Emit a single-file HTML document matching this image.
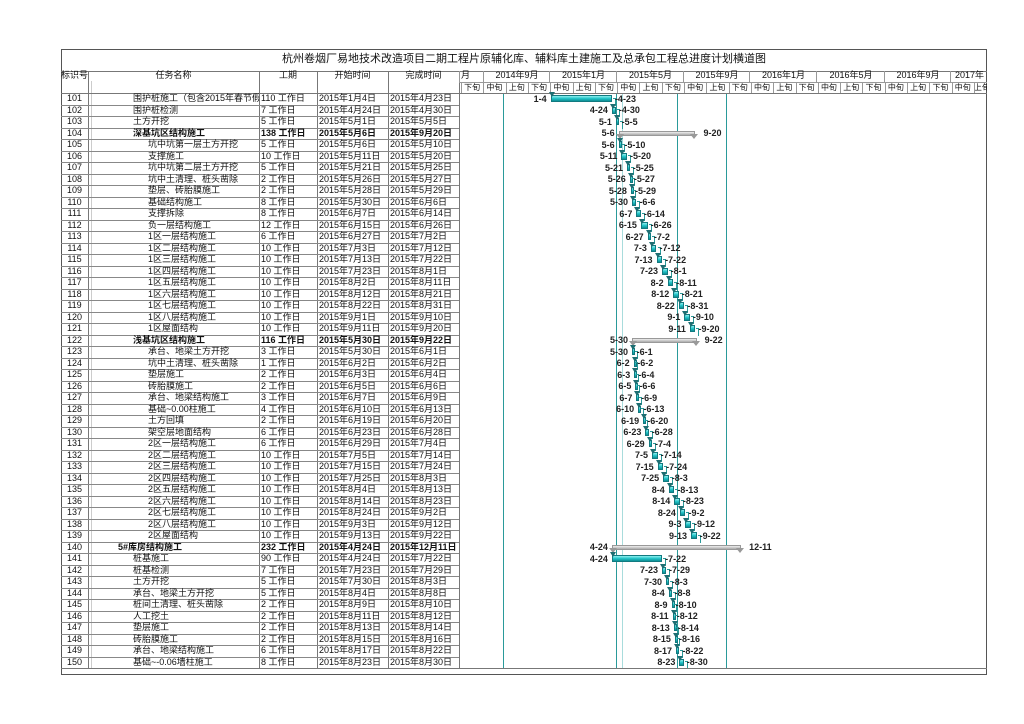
<!DOCTYPE html>
<html><head><meta charset="utf-8">
<style>
body{margin:0;background:#fff;width:1024px;height:724px;overflow:hidden;position:relative;font-family:"Liberation Sans","Noto Sans CJK SC",sans-serif;color:#111}
.a{position:absolute}
.t{position:absolute;font-size:9px;line-height:11.5px;white-space:nowrap;overflow:hidden}
.hl{position:absolute;height:1px;background:#777}
.vl{position:absolute;width:1px;background:#777}
.g{position:absolute;font-size:9px;line-height:10px;white-space:nowrap;font-weight:bold;color:#222}
.bar{position:absolute;height:7px;background:linear-gradient(#8ff0f0,#22c4c8 50%,#0e8f95);border:1px solid #127a80;box-sizing:border-box}
.sum{position:absolute;height:5px;background:linear-gradient(#eee,#aaa);border:1px solid #999;box-sizing:border-box}
.tri{position:absolute;width:0;height:0;border-left:3.5px solid transparent;border-right:3.5px solid transparent;border-top:5px solid #1e6e72}
.stri{position:absolute;width:0;height:0;border-left:4px solid transparent;border-right:4px solid transparent;border-top:5px solid #999}
</style></head><body>
<div id="root"></div>
<script>
var R=document.getElementById('root');var h='';
function A(s){h+=s;}
A('<div class="a" style="left:61px;top:49px;width:926px;height:626px;border:1px solid #555;box-sizing:border-box"></div>');
A('<div class="t" style="left:61px;top:52px;width:926px;text-align:center;font-size:11px;line-height:14px">杭州卷烟厂易地技术改造项目二期工程片原辅化库、辅料库土建施工及总承包工程总进度计划横道图</div>');
A('<div class="hl" style="left:61px;top:71px;width:926px"></div>');
var cols=[61,88,259,317,388,459];
var hd=['标识号','任务名称','工期','开始时间','完成时间'];
for(var i=0;i<5;i++){A('<div class="t" style="left:'+cols[i]+'px;top:70px;width:'+(cols[i+1]-cols[i])+'px;text-align:center">'+hd[i]+'</div>');}
for(var i=1;i<6;i++){A('<div class="vl" style="left:'+cols[i]+'px;top:71px;height:597px"></div>');}
A('<div class="vl" style="left:91px;top:81px;height:587px;background:#ccc"></div>');
A('<div class="hl" style="left:61px;top:93px;width:926px"></div>');
A('<div class="hl" style="left:459px;top:82px;width:528px;background:#999"></div>');
var per=['月','2014年9月','2015年1月','2015年5月','2015年9月','2016年1月','2016年5月','2016年9月','2017年'];
var px=[459,483,549,616,683,749,816,884,950,987];
for(var i=0;i<9;i++){A('<div class="t" style="left:'+(px[i]+2)+'px;top:70px;width:'+(px[i+1]-px[i]-2)+'px;text-align:'+(i==0?'left':'center')+'">'+per[i]+'</div>');A('<div class="vl" style="left:'+px[i]+'px;top:71px;height:11px;background:#999"></div>');}
var subs=['下旬','中旬','上旬'];var w=22.3;
for(var k=0;k<24;k++){var x=461+k*w;if(x>986)break;var ww=Math.min(w,987-x);A('<div class="t" style="left:'+x+'px;top:82px;width:'+ww+'px;text-align:center;font-size:8px">'+subs[k%3]+'</div>');A('<div class="vl" style="left:'+x+'px;top:83px;height:10px;background:#999"></div>');}
var D=[
['101','围护桩施工（包含2015年春节假期）',110,'1-4','4-23',0],
['102','围护桩检测',7,'4-24','4-30',0],
['103','土方开挖',5,'5-1','5-5',0],
['104','深基坑区结构施工',138,'5-6','9-20',1],
['105','坑中坑第一层土方开挖',5,'5-6','5-10',2],
['106','支撑施工',10,'5-11','5-20',2],
['107','坑中坑第二层土方开挖',5,'5-21','5-25',2],
['108','坑中土清理、桩头凿除',2,'5-26','5-27',2],
['109','垫层、砖胎膜施工',2,'5-28','5-29',2],
['110','基础结构施工',8,'5-30','6-6',2],
['111','支撑拆除',8,'6-7','6-14',2],
['112','负一层结构施工',12,'6-15','6-26',2],
['113','1区一层结构施工',6,'6-27','7-2',2],
['114','1区二层结构施工',10,'7-3','7-12',2],
['115','1区三层结构施工',10,'7-13','7-22',2],
['116','1区四层结构施工',10,'7-23','8-1',2],
['117','1区五层结构施工',10,'8-2','8-11',2],
['118','1区六层结构施工',10,'8-12','8-21',2],
['119','1区七层结构施工',10,'8-22','8-31',2],
['120','1区八层结构施工',10,'9-1','9-10',2],
['121','1区屋面结构',10,'9-11','9-20',2],
['122','浅基坑区结构施工',116,'5-30','9-22',1],
['123','承台、地梁土方开挖',3,'5-30','6-1',2],
['124','坑中土清理、桩头凿除',1,'6-2','6-2',2],
['125','垫层施工',2,'6-3','6-4',2],
['126','砖胎膜施工',2,'6-5','6-6',2],
['127','承台、地梁结构施工',3,'6-7','6-9',2],
['128','基础~0.00柱施工',4,'6-10','6-13',2],
['129','土方回填',2,'6-19','6-20',2],
['130','架空层地面结构',6,'6-23','6-28',2],
['131','2区一层结构施工',6,'6-29','7-4',2],
['132','2区二层结构施工',10,'7-5','7-14',2],
['133','2区三层结构施工',10,'7-15','7-24',2],
['134','2区四层结构施工',10,'7-25','8-3',2],
['135','2区五层结构施工',10,'8-4','8-13',2],
['136','2区六层结构施工',10,'8-14','8-23',2],
['137','2区七层结构施工',10,'8-24','9-2',2],
['138','2区八层结构施工',10,'9-3','9-12',2],
['139','2区屋面结构',10,'9-13','9-22',2],
['140','5#库房结构施工',232,'4-24','12-11',3],
['141','桩基施工',90,'4-24','7-22',0],
['142','桩基检测',7,'7-23','7-29',0],
['143','土方开挖',5,'7-30','8-3',0],
['144','承台、地梁土方开挖',5,'8-4','8-8',0],
['145','桩间土清理、桩头凿除',2,'8-9','8-10',0],
['146','人工挖土',2,'8-11','8-12',0],
['147','垫层施工',2,'8-13','8-14',0],
['148','砖胎膜施工',2,'8-15','8-16',0],
['149','承台、地梁结构施工',6,'8-17','8-22',0],
['150','基础~-0.06墙柱施工',8,'8-23','8-30',0]];
var md=[0,31,59,90,120,151,181,212,243,273,304,334];
function doy(s){var p=s.split('-');return md[+p[0]-1]+(+p[1]);}
function X(d){return 549+(d-1)*0.557;}
var RH=11.5,T0=93;
var indent=[133,133,148,118];
[[503,'#2a9a9a'],[616,'#2a9a9a'],[622,'#a8dcdc'],[677,'#2a9a9a'],[726,'#2a9a9a']].forEach(function(v){A('<div class="vl" style="left:'+v[0]+'px;top:94px;height:574px;background:'+v[1]+'"></div>');});
for(var i=0;i<D.length;i++){var r=D[i],y=T0+i*RH;var b=(r[5]==1||r[5]==3);var fw=b?'font-weight:bold;':'';
A('<div class="t" style="left:61px;top:'+y+'px;width:27px;text-align:center">'+r[0]+'</div>');
var ind=indent[r[5]];
A('<div class="t" style="left:'+ind+'px;top:'+y+'px;width:'+(259-ind)+'px;'+fw+'">'+r[1]+'</div>');
A('<div class="t" style="left:261px;top:'+y+'px;'+fw+'">'+r[2]+' 工作日</div>');
var sp=r[3].split('-'),ep=r[4].split('-');
A('<div class="t" style="left:319px;top:'+y+'px;width:68px;'+fw+'">2015年'+sp[0]+'月'+sp[1]+'日</div>');
A('<div class="t" style="left:390px;top:'+y+'px;width:68px;'+fw+'">2015年'+ep[0]+'月'+ep[1]+'日</div>');
A('<div class="hl" style="left:61px;top:'+(y+RH)+'px;width:398px;background:#888"></div>');
var s=doy(r[3]),e=doy(r[4]);var x1=X(s),x2=X(e+1);var cy=y+RH/2;
if(b){A('<div class="sum" style="left:'+x1+'px;top:'+(cy-2)+'px;width:'+(x2-x1)+'px"></div>');A('<div class="stri" style="left:'+(x1-3)+'px;top:'+(cy+1)+'px"></div><div class="stri" style="left:'+(x2-5)+'px;top:'+(cy+1)+'px"></div>');}
else{A('<div class="bar" style="left:'+x1+'px;top:'+(cy-3.5)+'px;width:'+Math.max(3,x2-x1)+'px"></div>');
A('<div class="tri" style="left:'+(x1-2)+'px;top:'+(y-1)+'px"></div>');
A('<div class="a" style="left:'+(x2+1)+'px;top:'+(cy-1)+'px;width:2px;height:7px;border-top:1px solid #2a9a9a;border-right:1px solid #2a9a9a"></div>');}
A('<div class="g" style="left:'+(x1-60)+'px;top:'+(cy-5)+'px;width:56px;text-align:right">'+r[3]+'</div>');
A('<div class="g" style="left:'+(x2+(b?8:3))+'px;top:'+(cy-5)+'px">'+(b?'':'-')+r[4]+'</div>');
}
A('<div class="hl" style="left:61px;top:668px;width:926px;background:#777"></div>');
R.innerHTML=h;
</script>
</body></html>
